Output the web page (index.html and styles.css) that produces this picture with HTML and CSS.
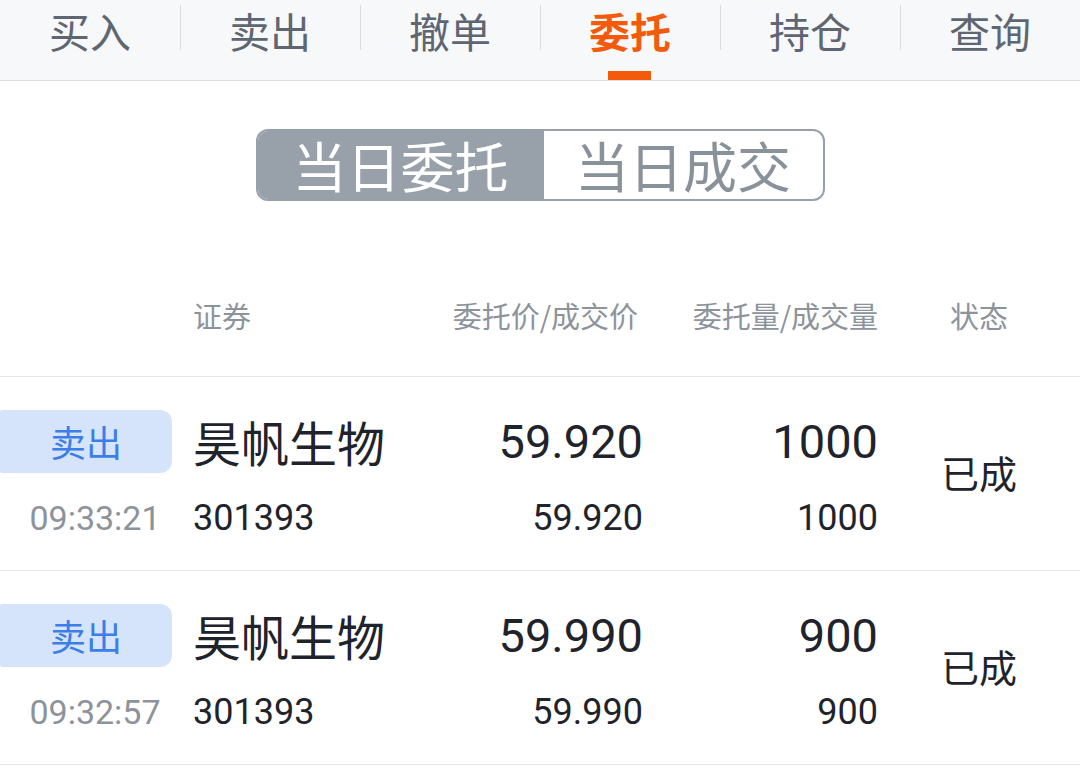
FILE: index.html
```html
<!DOCTYPE html>
<html lang="zh-CN">
<head>
  <meta charset="UTF-8">
  <meta name="viewport" content="width=device-width, initial-scale=1.0">
  <title>委托</title>
  <link rel="stylesheet" href="styles.css">
</head>
<body>
  <nav class="tabs">
    <div class="tab">买入</div>
    <div class="tab">卖出</div>
    <div class="tab">撤单</div>
    <div class="tab active">委托</div>
    <div class="tab">持仓</div>
    <div class="tab">查询</div>
  </nav>

  <div class="segment-wrap">
    <div class="segment">
      <div class="seg-item selected">当日委托</div>
      <div class="seg-item">当日成交</div>
    </div>
  </div>

  <div class="table-head">
    <div></div>
    <div class="col-name">证券</div>
    <div class="col-num price-head">委托价/成交价</div>
    <div class="col-num">委托量/成交量</div>
    <div class="col-status">状态</div>
  </div>

  <div class="order-row">
    <div class="col-side">
      <span class="badge">卖出</span>
      <span class="time">09:33:21</span>
    </div>
    <div class="col-name">
      <span class="main">昊帆生物</span>
      <span class="sub">301393</span>
    </div>
    <div class="col-num">
      <span class="main">59.920</span>
      <span class="sub">59.920</span>
    </div>
    <div class="col-num">
      <span class="main">1000</span>
      <span class="sub">1000</span>
    </div>
    <div class="col-status">已成</div>
  </div>

  <div class="order-row">
    <div class="col-side">
      <span class="badge">卖出</span>
      <span class="time">09:32:57</span>
    </div>
    <div class="col-name">
      <span class="main">昊帆生物</span>
      <span class="sub">301393</span>
    </div>
    <div class="col-num">
      <span class="main">59.990</span>
      <span class="sub">59.990</span>
    </div>
    <div class="col-num">
      <span class="main">900</span>
      <span class="sub">900</span>
    </div>
    <div class="col-status">已成</div>
  </div>
</body>
</html>
```

FILE: styles.css
```css
body {
  margin: 0;
  background: #ffffff;
  font-family: Roboto, "Noto Sans CJK SC", sans-serif;
  color: #1f232c;
  overflow: hidden;
}

/* top tabs */
.tabs {
  display: flex;
  align-items: flex-start;
  height: 80px;
  background: #f7f8fa;
  border-bottom: 1px solid #dcdee2;
}

.tab {
  position: relative;
  flex: 1;
  text-align: center;
  font-size: 41px;
  line-height: 60px;
  font-family: "Noto Sans CJK SC", sans-serif;
  color: #5e6672;
}

.tab + .tab::before {
  content: "";
  position: absolute;
  left: 0;
  top: 5px;
  height: 45px;
  border-left: 1px solid #d9dce0;
}

.tab.active {
  color: #f45a0c;
  font-weight: 700;
}

.tab.active::after {
  content: "";
  position: absolute;
  left: 68px;
  top: 71px;
  width: 43px;
  height: 9px;
  background: #f45a0c;
}

/* segmented switch */
.segment-wrap {
  display: flex;
  justify-content: center;
  padding-top: 48px;
}

.segment {
  display: flex;
  width: 569px;
  height: 72px;
  box-sizing: border-box;
  border: 2px solid #98a1aa;
  border-radius: 12px;
}

.seg-item {
  flex: 1;
  text-align: center;
  font-family: "Noto Sans CJK SC", sans-serif;
  font-size: 54px;
  line-height: 68px;
  color: #89929b;
}

.seg-item.selected {
  flex: 0 0 286px;
  background: #98a1aa;
  border-radius: 10px 0 0 10px;
  color: #ffffff;
}

/* table */
.table-head,
.order-row {
  display: grid;
  grid-template-columns: 193px 200px 250px 235px 1fr;
  border-bottom: 1px solid #e6e7e9;
}

.table-head {
  padding: 94px 0 41px;
  line-height: 40px;
  font-family: "Noto Sans CJK SC", sans-serif;
  font-size: 29px;
  color: #8c939b;
}

.col-name,
.col-num,
.col-side {
  display: flex;
  flex-direction: column;
}

.col-num {
  align-items: flex-end;
  text-align: right;
}

.price-head {
  padding-right: 5px;
}

.col-status {
  text-align: center;
  font-family: "Noto Sans CJK SC", sans-serif;
}

.order-row {
  padding: 33px 0 27px;
}

.order-row .main,
.order-row .badge {
  height: 63px;
  line-height: 63px;
}

.order-row .sub,
.order-row .time {
  margin-top: 20px;
  height: 50px;
  line-height: 50px;
}

.badge {
  width: 172px;
  background: #d6e4fb;
  border-radius: 2px 12px 12px 2px;
  color: #3b7ee8;
  font-family: "Noto Sans CJK SC", sans-serif;
  font-size: 36px;
  text-align: center;
}

.time {
  width: 190px;
  text-align: center;
  font-size: 34px;
  color: #8c939b;
}

.col-name .main {
  font-family: "Noto Sans CJK SC", sans-serif;
  font-size: 48px;
}

.col-num .main {
  font-size: 47px;
}

.sub {
  font-size: 36px;
}

.order-row .col-status {
  display: flex;
  align-items: center;
  justify-content: center;
  font-size: 38px;
  padding-bottom: 10px;
}
```
